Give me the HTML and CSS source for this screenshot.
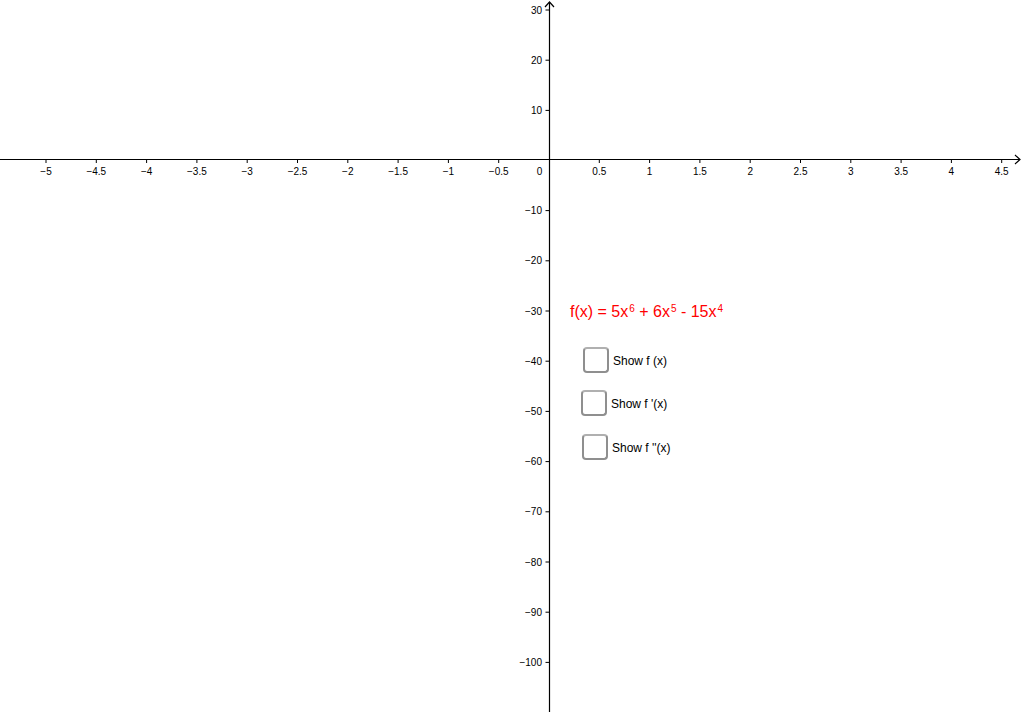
FILE: index.html
```html
<!DOCTYPE html>
<html>
<head>
<meta charset="utf-8">
<link rel="stylesheet" href="styles.css">
</head>
<body>
<div class="canvas">
<svg class="axes" width="1023" height="712" viewBox="0 0 1023 712">
  <g class="lines">
    <line x1="0" y1="159.5" x2="1020" y2="159.5"/>
    <line x1="549.5" y1="2" x2="549.5" y2="712"/>
    <polyline points="1015,155 1020,159.5 1015,164" fill="none"/>
    <polyline points="545,7 549.5,2 554,7" fill="none"/>
  </g>
  <g class="ticks">
    <line x1="46" y1="159" x2="46" y2="163"/>
    <line x1="96.3" y1="159" x2="96.3" y2="163"/>
    <line x1="146.6" y1="159" x2="146.6" y2="163"/>
    <line x1="196.9" y1="159" x2="196.9" y2="163"/>
    <line x1="247.2" y1="159" x2="247.2" y2="163"/>
    <line x1="297.5" y1="159" x2="297.5" y2="163"/>
    <line x1="347.8" y1="159" x2="347.8" y2="163"/>
    <line x1="398.1" y1="159" x2="398.1" y2="163"/>
    <line x1="448.4" y1="159" x2="448.4" y2="163"/>
    <line x1="498.7" y1="159" x2="498.7" y2="163"/>
    <line x1="599.3" y1="159" x2="599.3" y2="163"/>
    <line x1="649.6" y1="159" x2="649.6" y2="163"/>
    <line x1="699.9" y1="159" x2="699.9" y2="163"/>
    <line x1="750.2" y1="159" x2="750.2" y2="163"/>
    <line x1="800.5" y1="159" x2="800.5" y2="163"/>
    <line x1="850.8" y1="159" x2="850.8" y2="163"/>
    <line x1="901.1" y1="159" x2="901.1" y2="163"/>
    <line x1="951.4" y1="159" x2="951.4" y2="163"/>
    <line x1="1001.7" y1="159" x2="1001.7" y2="163"/>
    <line x1="545.5" y1="10" x2="550" y2="10"/>
    <line x1="545.5" y1="60.2" x2="550" y2="60.2"/>
    <line x1="545.5" y1="110.4" x2="550" y2="110.4"/>
    <line x1="545.5" y1="210.6" x2="550" y2="210.6"/>
    <line x1="545.5" y1="260.8" x2="550" y2="260.8"/>
    <line x1="545.5" y1="311" x2="550" y2="311"/>
    <line x1="545.5" y1="361.2" x2="550" y2="361.2"/>
    <line x1="545.5" y1="411.4" x2="550" y2="411.4"/>
    <line x1="545.5" y1="461.6" x2="550" y2="461.6"/>
    <line x1="545.5" y1="511.8" x2="550" y2="511.8"/>
    <line x1="545.5" y1="562" x2="550" y2="562"/>
    <line x1="545.5" y1="612.2" x2="550" y2="612.2"/>
    <line x1="545.5" y1="662.4" x2="550" y2="662.4"/>
  </g>
  <g class="xlabels">
    <text x="46" y="175">−5</text>
    <text x="96.3" y="175">−4.5</text>
    <text x="146.6" y="175">−4</text>
    <text x="196.9" y="175">−3.5</text>
    <text x="247.2" y="175">−3</text>
    <text x="297.5" y="175">−2.5</text>
    <text x="347.8" y="175">−2</text>
    <text x="398.1" y="175">−1.5</text>
    <text x="448.4" y="175">−1</text>
    <text x="498.7" y="175">−0.5</text>
    <text x="539.5" y="175">0</text>
    <text x="599.3" y="175">0.5</text>
    <text x="649.6" y="175">1</text>
    <text x="699.9" y="175">1.5</text>
    <text x="750.2" y="175">2</text>
    <text x="800.5" y="175">2.5</text>
    <text x="850.8" y="175">3</text>
    <text x="901.1" y="175">3.5</text>
    <text x="951.4" y="175">4</text>
    <text x="1001.7" y="175">4.5</text>
  </g>
  <g class="ylabels">
    <text x="542" y="13.5">30</text>
    <text x="542" y="63.7">20</text>
    <text x="542" y="113.9">10</text>
    <text x="542" y="214.1">−10</text>
    <text x="542" y="264.3">−20</text>
    <text x="542" y="314.5">−30</text>
    <text x="542" y="364.7">−40</text>
    <text x="542" y="414.9">−50</text>
    <text x="542" y="465.1">−60</text>
    <text x="542" y="515.3">−70</text>
    <text x="542" y="565.5">−80</text>
    <text x="542" y="615.7">−90</text>
    <text x="542" y="665.9">−100</text>
  </g>
</svg>
<div class="formula">f(x) = 5x<span class="sup">6</span> + 6x<span class="sup">5</span> - 15x<span class="sup">4</span></div>
<label class="check c1"><span class="box"></span><span class="txt">Show f (x)</span></label>
<label class="check c2"><span class="box"></span><span class="txt">Show f '(x)</span></label>
<label class="check c3"><span class="box"></span><span class="txt">Show f ''(x)</span></label>
</div>
</body>
</html>
```
FILE: styles.css
```css
html, body {
  margin: 0;
  padding: 0;
  background: #ffffff;
  overflow: hidden;
}
.canvas {
  position: relative;
  width: 1023px;
  height: 712px;
  font-family: "Liberation Sans", Arial, sans-serif;
}
.axes {
  display: block;
}
.lines line, .lines polyline {
  stroke: #000;
  stroke-width: 1.2;
}
.ticks line {
  stroke: #000;
  stroke-width: 1;
}
.xlabels text {
  font-family: "Liberation Sans", Arial, sans-serif;
  font-size: 10px;
  text-anchor: middle;
  fill: #000;
}
.ylabels text {
  font-family: "Liberation Sans", Arial, sans-serif;
  font-size: 10px;
  text-anchor: end;
  fill: #000;
}
.formula {
  position: absolute;
  left: 570px;
  top: 302px;
  color: #ff0000;
  font-size: 16px;
  line-height: 20px;
  white-space: nowrap;
}
.sup {
  font-size: 10px;
  position: relative;
  top: -5px;
  margin-left: 1px;
}
.check {
  position: absolute;
  display: flex;
  align-items: center;
  gap: 4px;
  font-size: 12px;
  color: #000;
  white-space: nowrap;
}
.box {
  width: 22px;
  height: 22px;
  border: 2px solid #8f8f8f;
  border-top-color: #b0b0b0;
  border-radius: 4px;
  background: #fff;
}
.txt {
  position: relative;
  top: 1px;
}
.c1 { left: 583px; top: 347px; }
.c2 { left: 581px; top: 390px; }
.c3 { left: 582px; top: 434px; }
```
